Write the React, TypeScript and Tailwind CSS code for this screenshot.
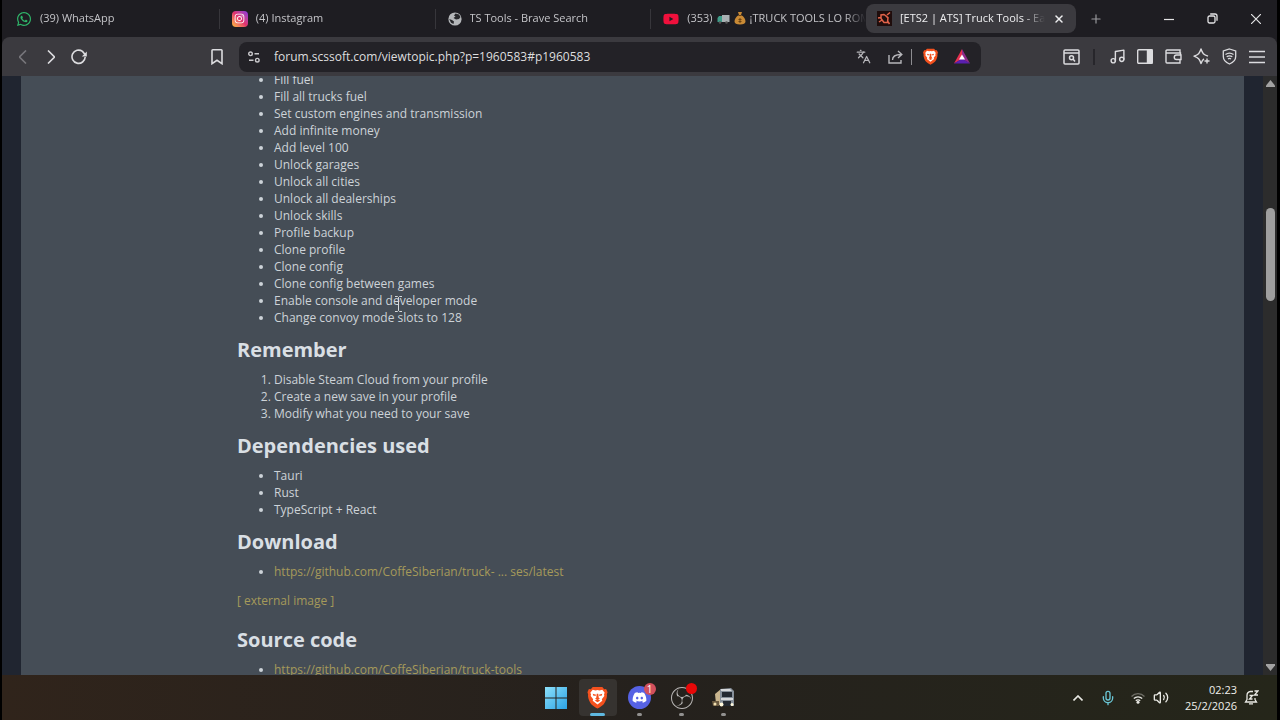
import type { ReactNode } from "react";
import { FaWhatsapp, FaInstagram, FaYoutube, FaDiscord } from "react-icons/fa";
import { SiBrave, SiObsstudio } from "react-icons/si";
import { BellDot, Languages, Mic, Music, Plus, Volume2, Wifi, X } from "lucide-react";

const features = [
  "Fill fuel",
  "Fill all trucks fuel",
  "Set custom engines and transmission",
  "Add infinite money",
  "Add level 100",
  "Unlock garages",
  "Unlock all cities",
  "Unlock all dealerships",
  "Unlock skills",
  "Profile backup",
  "Clone profile",
  "Clone config",
  "Clone config between games",
  "Enable console and developer mode",
  "Change convoy mode slots to 128",
];

const steps = [
  "Disable Steam Cloud from your profile",
  "Create a new save in your profile",
  "Modify what you need to your save",
];

const dependencies = ["Tauri", "Rust", "TypeScript + React"];

function Tab({ icon, children }: { icon: ReactNode; children: ReactNode }) {
  return (
    <div className="flex h-5 min-w-0 flex-1 items-center gap-2 border-r border-[#37363b] pl-3 text-[#c4c4c8]">
      {icon}
      <button className="flex flex-1 items-center gap-1 overflow-hidden text-left whitespace-nowrap [mask-image:linear-gradient(to_right,black_88%,transparent)]">
        {children}
      </button>
    </div>
  );
}

function ToolButton({ label, children }: { label: string; children: ReactNode }) {
  return (
    <button aria-label={label} className="flex h-7 w-7 items-center justify-center text-[#dcdcdf]">
      {children}
    </button>
  );
}

function Heading({ children }: { children: ReactNode }) {
  return <h2 className="mt-3 mb-[9px] text-[20px] leading-6 font-bold text-[#d9dfe4]">{children}</h2>;
}

function BraveLogo({ size }: { size: number }) {
  return (
    <svg width={size} height={size} viewBox="0 0 24 24">
      <path fill="#f4511e" d="M7 1h10l2 2.3 2-.2 1.5 3.4-.7 2.2c.6 3.6-1.700 8.300-3.300 10.300-1.200 1.400-4.500 3.500-6.500 4.500-2-1-5.300-3.100-6.500-4.500C3.900 17 1.600 12.300 2.200 8.700L1.500 6.500 3 3.100l2 .2z" />
      <path fill="#fff" d="m12 4.200 2 .5 3-.7 2.500 3-.7 1.500.3 2-2.600 3.200.5 1.800-5 3.900-5-3.900.5-1.800-2.600-3.200.3-2L4.500 7 7 4l3 .7z" />
      <path fill="#f4511e" d="m7 8.200 3.600.8-.4 1.300-2.500-.2zM17 8.200l-3.600.8.4 1.300 2.500-.2zM11.200 8h1.600l.5 4.300 1.200 1L12 14.800l-2.500-1.500 1.200-1zM9 15l3-1 3 1-3 2z" />
    </svg>
  );
}

function TabStrip() {
  return (
    <div className="flex h-[37px] shrink-0 items-center pl-[2px] text-[11px]">
      <div className="flex min-w-0 flex-1">
        <Tab icon={<FaWhatsapp size={16} className="shrink-0 text-[#2fb66a]" />}>(39) WhatsApp</Tab>
        <Tab
          icon={
            <span className="flex h-4 w-4 shrink-0 items-center justify-center rounded bg-linear-to-tr from-[#fdbb2d] via-[#e1306c] to-[#8a2be2] text-white">
              <FaInstagram size={11} />
            </span>
          }
        >
          (4) Instagram
        </Tab>
        <Tab
          icon={
            <svg width="14" height="14" viewBox="0 0 14 14" className="shrink-0">
              <circle cx="7" cy="7" r="6.600" fill="#b5b7ba" />
              <path fill="#28282c" d="M7.500 1.500 6 3.500l1.500 1L5.500 6 8 7.500l3-.5 1.500-2L11 2.500zM1.200 7 4 8l2 1.500L5.500 12 3 10.800z" />
            </svg>
          }
        >
          TS Tools - Brave Search
        </Tab>
        <div className="flex h-5 min-w-0 flex-1 items-center gap-2 pl-3 text-[#c4c4c8]">
          <FaYoutube size={16} className="shrink-0 text-[#f0103c]" />
          <button className="flex flex-1 items-center gap-1 overflow-hidden text-left whitespace-nowrap [mask-image:linear-gradient(to_right,black_88%,transparent)]">
            <span>(353)</span>
            <svg width="13" height="10" viewBox="0 0 13 10" className="shrink-0">
              <path fill="#a9b0b3" d="M5 1h7.500v7H5z" />
              <path fill="#3f9c89" d="M.5 4 2 2h3v6H.5z" />
              <circle cx="3" cy="8.500" r="1.300" fill="#555" />
              <circle cx="9.500" cy="8.500" r="1.300" fill="#555" />
            </svg>
            <svg width="12" height="13" viewBox="0 0 12 13" className="shrink-0">
              <path fill="#c98a35" d="M4 0h4L7 3c3 1.500 4.500 4 4.500 6.500 0 2-2 3-5.500 3S.500 11.500.500 9.500C.500 7 2 4.500 5 3z" />
              <path fill="#6b4313" d="M4.500 3h3v1h-3zM5.500 6h1v5h-1zM4.500 7h3v1h-3zM4.500 9h3v1h-3z" />
            </svg>
            <span>¡TRUCK TOOLS LO ROMPE</span>
          </button>
        </div>
      </div>
      <div className="flex h-[29px] w-[210px] items-center gap-2 rounded-lg bg-[#3b3a3f] px-[11px] text-[#eeeef0]">
        <svg width="15" height="15" viewBox="0 0 15 15" className="shrink-0">
          <path fill="#1f0d0c" d="M0 0h15v15H0z" />
          <path fill="none" stroke="#e2634a" strokeWidth="1.500" d="M7 3.500 4 4v3.500l3 4h3.500l.5-5zM1 7l3-.5M2 11l3-2M10 4l3-2.500M10.500 10l2 3M9 5l2 2" />
        </svg>
        <button className="flex-1 overflow-hidden text-left whitespace-nowrap [mask-image:linear-gradient(to_right,black_85%,transparent)]">
          [ETS2 | ATS] Truck Tools - Easy save editor
        </button>
        <button aria-label="Close tab">
          <X size={12} strokeWidth={3} />
        </button>
      </div>
      <button aria-label="New tab" className="flex w-10 justify-center text-[#9a9a9e]">
        <Plus size={14} />
      </button>
      <div className="ml-[31px] flex text-[#e4e4e6]">
        <button aria-label="Minimize" className="flex h-8 w-11 items-center justify-center">
          <svg width="10" height="10" viewBox="0 0 10 10" stroke="currentColor" strokeWidth="1.200">
            <path d="M0 5.500h10" />
          </svg>
        </button>
        <button aria-label="Restore" className="flex h-8 w-[43px] items-center justify-center">
          <svg width="11" height="11" viewBox="0 0 11 11" fill="none" stroke="currentColor" strokeWidth="1.300">
            <rect x="1" y="3" width="7" height="7" rx="1.500" />
            <path d="M3.200 1h4.800a2 2 0 0 1 2 2v4.800" />
          </svg>
        </button>
        <button aria-label="Close" className="flex h-8 w-[43px] items-center justify-center">
          <svg width="10" height="10" viewBox="0 0 10 10" stroke="currentColor" strokeWidth="1.200">
            <path d="m0 0 10 10M10 0 0 10" />
          </svg>
        </button>
      </div>
    </div>
  );
}

function Toolbar() {
  return (
    <div className="flex h-[39px] shrink-0 items-center rounded-t-lg bg-[#3b3a3f] text-[#dcdcdf]">
      <div className="flex w-[237px] shrink-0 items-center justify-between pr-2 pl-[7px]">
        <div className="flex">
          <ToolButton label="Back">
            <svg width="8" height="14" viewBox="0 0 8 14" fill="none" stroke="#77767b" strokeWidth="1.600">
              <path d="M7 .5.500 7 7 13.500" />
            </svg>
          </ToolButton>
          <ToolButton label="Forward">
            <svg width="8" height="14" viewBox="0 0 8 14" fill="none" stroke="currentColor" strokeWidth="1.600">
              <path d="M1 .5 7.500 7 1 13.500" />
            </svg>
          </ToolButton>
          <ToolButton label="Reload">
            <svg width="16" height="16" viewBox="0 0 16 16" fill="none" stroke="currentColor" strokeWidth="1.600">
              <path d="M14.200 8A6.600 6.600 0 1 1 11.500 2.400L14.500 6" />
              <path fill="currentColor" stroke="none" d="M15.800 2.500v5h-5z" />
            </svg>
          </ToolButton>
        </div>
        <ToolButton label="Bookmark this page">
          <svg width="12" height="16" viewBox="0 0 12 16" fill="none" stroke="currentColor" strokeWidth="1.600">
            <path d="M1 1.500A.7.700 0 0 1 1.700.800h8.600a.7.700 0 0 1 .7.700v13.200l-5-3.400-5 3.400z" />
          </svg>
        </ToolButton>
      </div>
      <div className="flex h-[30px] min-w-0 flex-1 items-center rounded-lg bg-[#232227] pr-[5px] pl-[9px]">
        <svg width="12" height="12" viewBox="0 0 12 12" fill="none" stroke="#c9c9cc" strokeWidth="1.400" className="shrink-0">
          <circle cx="2.500" cy="2.800" r="1.800" />
          <path d="M6.500 2.800H11M1 9.200h4.500" />
          <circle cx="9.300" cy="9.200" r="1.800" />
        </svg>
        <input
          type="text"
          aria-label="Address"
          defaultValue="forum.scssoft.com/viewtopic.php?p=1960583#p1960583"
          className="ml-[14px] min-w-0 flex-1 bg-transparent text-[12px] text-[#dededf] outline-none"
        />
        <button aria-label="Translate" className="flex w-8 justify-center text-[#b6b6ba]">
          <Languages size={15} />
        </button>
        <button aria-label="Share" className="flex w-8 justify-center text-[#b6b6ba]">
          <svg width="15" height="14" viewBox="0 0 15 14" fill="none" stroke="currentColor" strokeWidth="1.400">
            <path d="M1 5v8h12v-3M4.500 10c0-4 3-5.500 8.500-5.500M10 1l3.800 3.500L10 8" />
          </svg>
        </button>
        <div className="h-4 w-px bg-[#8d8d91]" />
        <button aria-label="Brave Shields" className="flex w-9 justify-center">
          <BraveLogo size={17} />
        </button>
        <button aria-label="Brave Rewards" className="flex w-7 justify-center">
          <svg width="16" height="15" viewBox="0 0 16 15">
            <path fill="#e5304f" d="M8 0 0 14.500 8 10z" />
            <path fill="#8e2a8b" d="M8 0v10l8 4.500z" />
            <path fill="#5a1fb0" d="M0 14.500h16L8 9.500z" />
            <path fill="#fff" d="m8 5.500-3 5h6z" />
          </svg>
        </button>
      </div>
      <div className="flex w-[296px] shrink-0 items-center justify-end pr-[6px]">
        <ToolButton label="Search tabs">
          <svg width="17" height="16" viewBox="0 0 17 16" fill="none" stroke="currentColor" strokeWidth="1.500">
            <rect x="1" y="1" width="15" height="14" rx="1" />
            <path d="M1 4h15M10 10l2 2.500" />
            <circle cx="8.500" cy="8.800" r="2" />
          </svg>
        </ToolButton>
        <div className="mx-2 h-4 w-[2px] bg-[#27262b]" />
        <ToolButton label="Media">
          <Music size={17} />
        </ToolButton>
        <ToolButton label="Sidebar">
          <svg width="16" height="15" viewBox="0 0 16 15" fill="none" stroke="currentColor" strokeWidth="1.400">
            <rect x=".700" y=".700" width="14.600" height="13.600" rx="1" />
            <path fill="currentColor" d="M10.500 1H15v13h-4.500z" />
          </svg>
        </ToolButton>
        <ToolButton label="Wallet">
          <svg width="17" height="15" viewBox="0 0 17 15" fill="none" stroke="currentColor" strokeWidth="1.400">
            <path d="M15 4.500V1H2a1 1 0 0 0-1 1v11a1 1 0 0 0 1 1h13v-3M1 4h14.500v2M16 6h-4.500a2.200 2.200 0 0 0 0 4.500H16z" />
          </svg>
        </ToolButton>
        <ToolButton label="Leo AI">
          <svg width="17" height="17" viewBox="0 0 17 17" fill="none" stroke="currentColor" strokeWidth="1.400" strokeLinejoin="round">
            <path d="M11 11c-1.500.7-2 1.800-3 4.500C6.500 11 5.500 10 1 8.200 5.500 6.500 6.500 5.500 8 1c1.500 4.500 2.500 5.500 7 7.200M14 10.500v5M11.500 13h5" />
          </svg>
        </ToolButton>
        <ToolButton label="VPN">
          <svg width="15" height="17" viewBox="0 0 15 17" fill="none" stroke="currentColor" strokeWidth="1.300">
            <path d="m7.500 1 6.200 2v5.500c0 3.500-2.700 6-6.200 7.500-3.500-1.500-6.200-4-6.200-7.500V3zM3.500 6.500a7 7 0 0 1 8 0M4.700 8.800a5 5 0 0 1 5.600 0M6 11a2.500 2.500 0 0 1 3 0" />
          </svg>
        </ToolButton>
        <ToolButton label="Menu">
          <svg width="16" height="14" viewBox="0 0 16 14" stroke="currentColor" strokeWidth="1.600">
            <path d="M0 1.500h16M0 7h16M0 12.500h16" />
          </svg>
        </ToolButton>
      </div>
    </div>
  );
}

function Post() {
  return (
    <main className="relative min-w-0 flex-1 overflow-hidden bg-[#454d56] pl-[216px] text-[12px] leading-[17px] text-[#cdd3d8]">
      <ul className="-mt-[5px] list-disc pl-[37px]">
        {features.map((item) => (
          <li key={item}>{item}</li>
        ))}
      </ul>
      <Heading>Remember</Heading>
      <ol className="list-decimal pl-[37px]">
        {steps.map((item) => (
          <li key={item}>{item}</li>
        ))}
      </ol>
      <Heading>Dependencies used</Heading>
      <ul className="list-disc pl-[37px]">
        {dependencies.map((item) => (
          <li key={item}>{item}</li>
        ))}
      </ul>
      <Heading>Download</Heading>
      <ul className="list-disc pl-[37px]">
        <li>
          <a href="#latest" className="text-[#a59a5a]">https://github.com/CoffeSiberian/truck- ... ses/latest</a>
        </li>
      </ul>
      <p className="mt-3 mb-[19px]">
        <a href="#image" className="text-[#a59a5a]">[ external image ]</a>
      </p>
      <Heading>Source code</Heading>
      <ul className="list-disc pl-[37px]">
        <li>
          <a href="#source" className="text-[#a59a5a]">https://github.com/CoffeSiberian/truck-tools</a>
        </li>
      </ul>
      {/* text cursor */}
      <svg width="7" height="16" viewBox="0 0 7 16" fill="none" stroke="#d5d9dc" className="absolute top-[220px] left-[374px]">
        <path d="M0 .5h2.500l1 1 1-1H7M3.500 1.500v13M0 15.500h2.500l1-1 1 1H7" />
      </svg>
    </main>
  );
}

function Scrollbar() {
  return (
    <div className="flex w-[14px] shrink-0 flex-col items-center bg-[#2c2c2c] py-1">
      <svg width="9" height="7" viewBox="0 0 9 7" fill="#a3a3a3">
        <path d="M4.500 0 9 5.500V7H0V5.500z" />
      </svg>
      <div className="mt-[121px] h-[93px] w-[9px] rounded-full bg-[#9f9f9f]" />
      <svg width="9" height="7" viewBox="0 0 9 7" fill="#a3a3a3" className="mt-auto">
        <path d="M0 0h9v1.500L4.500 7 0 1.500z" />
      </svg>
    </div>
  );
}

function TaskButton({ label, active, running, children }: { label: string; active?: boolean; running?: boolean; children: ReactNode }) {
  return (
    <button
      aria-label={label}
      className={`relative flex h-[37px] w-[38px] items-center justify-center rounded ${active ? "bg-[#363330]" : ""}`}
    >
      {children}
      {active && <span className="absolute bottom-0 h-[3px] w-[15px] rounded-full bg-[#5fb8e0]" />}
      {running && <span className="absolute bottom-0 h-[3px] w-[5px] rounded-full bg-[#929190]" />}
    </button>
  );
}

function Taskbar() {
  return (
    <footer className="grid h-[45px] shrink-0 grid-cols-[1fr_auto_1fr] items-center bg-linear-to-r from-[#30241b] via-[#25211d] to-[#25261a]">
      <div />
      <div className="flex gap-1">
        <TaskButton label="Start">
          <svg width="22" height="22" viewBox="0 0 22 22">
            <defs>
              <linearGradient id="win" x1="0" y1="0" x2="1" y2="1">
                <stop offset="0" stopColor="#8de0fa" />
                <stop offset="1" stopColor="#2ba3e6" />
              </linearGradient>
            </defs>
            <path fill="url(#win)" d="M0 0h10.500v10.500H0zM11.500 0H22v10.500H11.500zM0 11.500h10.500V22H0zM11.500 11.500H22V22H11.500z" />
          </svg>
        </TaskButton>
        <TaskButton label="Brave" active>
          <BraveLogo size={23} />
        </TaskButton>
        <TaskButton label="Discord" running>
          <span className="flex h-[23px] w-[23px] items-center justify-center rounded-full bg-[#5662e4] text-white">
            <FaDiscord size={15} />
          </span>
          <span className="absolute top-1 right-[3px] h-3 w-3 rounded-full bg-[#d2505c] text-center text-[10px] leading-3 text-white">
            1
          </span>
        </TaskButton>
        <TaskButton label="OBS Studio" running>
          <SiObsstudio size={22} className="text-[#b9b7b6]" />
          <span className="absolute top-1 right-1 h-[11px] w-[11px] rounded-full bg-[#e80808]" />
        </TaskButton>
        <TaskButton label="Euro Truck Simulator 2" running>
          <svg width="23" height="22" viewBox="0 0 23 22">
            <path fill="#c9b58e" d="M3 7 9 2v16l-5-1z" />
            <path fill="#87909a" d="M8 2 19 1l3 3v15H8z" />
            <path fill="#d6d8da" d="M9 2h9l2 2H9zM9 11h12v2H9z" />
            <path fill="#242a32" d="M10 5h10v5H10zM11 14h8v5h-8z" />
            <path fill="#6a5a40" d="M0 14h7v5H1z" />
            <circle cx="9.500" cy="17.500" r="2" fill="#fff8dc" />
            <circle cx="20" cy="17.500" r="1.500" fill="#fff8dc" />
            <circle cx="3" cy="17" r="1.500" fill="#f0dfb0" />
          </svg>
        </TaskButton>
      </div>
      <div className="flex items-center justify-end pr-[18px] text-[#e9e9e4]">
        <button aria-label="Show hidden icons" className="flex w-[30px] justify-center">
          <svg width="10" height="6" viewBox="0 0 10 6" fill="none" stroke="currentColor" strokeWidth="1.600">
            <path d="m.5 5.500 4.500-4.500 4.500 4.500" />
          </svg>
        </button>
        <button aria-label="Microphone" className="flex w-[30px] justify-center text-[#6ac5d4]">
          <Mic size={16} />
        </button>
        <button aria-label="Network" className="flex w-[30px] justify-center">
          <svg width="14" height="12" viewBox="0 0 14 12" fill="none" strokeWidth="1.300">
            <path stroke="#6f6e66" d="M.5 4.500a9 9 0 0 1 13 0" />
            <path stroke="currentColor" d="M2.800 6.500a6 6 0 0 1 8.400 0M4.800 8.800a3 3 0 0 1 4.400 0" />
            <circle cx="7" cy="10.300" r="1.500" fill="currentColor" />
          </svg>
        </button>
        <button aria-label="Volume" className="flex w-4 justify-center">
          <Volume2 size={17} />
        </button>
        <button className="w-[68px] text-right text-[11px] leading-4 text-[#f0f0ec]">
          02:23
          <br />
          25/2/2026
        </button>
        <button aria-label="Notifications" className="ml-[7px]">
          <svg width="15" height="15" viewBox="0 0 15 15" fill="none" stroke="currentColor" strokeWidth="1.300">
            <path d="M9 1.500H6.500A4 4 0 0 0 3 5.500v4L1.500 12h11L11 9.500V8M5 13.800h4M10.500 1H14l-3.500 4H14M5.500 5.500h3l-3 3.500h3" />
          </svg>
        </button>
      </div>
    </footer>
  );
}

export default function App() {
  return (
    <div className="flex h-screen flex-col overflow-hidden bg-black pr-[3px] pl-[2px] font-['Open_Sans','Noto_Sans',sans-serif]">
      <div className="flex min-h-0 flex-1 flex-col bg-[#1e1d22]">
        <TabStrip />
        <Toolbar />
        <div className="flex min-h-0 flex-1 bg-[#202530] pl-[19px]">
          <Post />
          <div className="w-[19px] shrink-0" />
          <Scrollbar />
        </div>
      </div>
      <Taskbar />
    </div>
  );
}
